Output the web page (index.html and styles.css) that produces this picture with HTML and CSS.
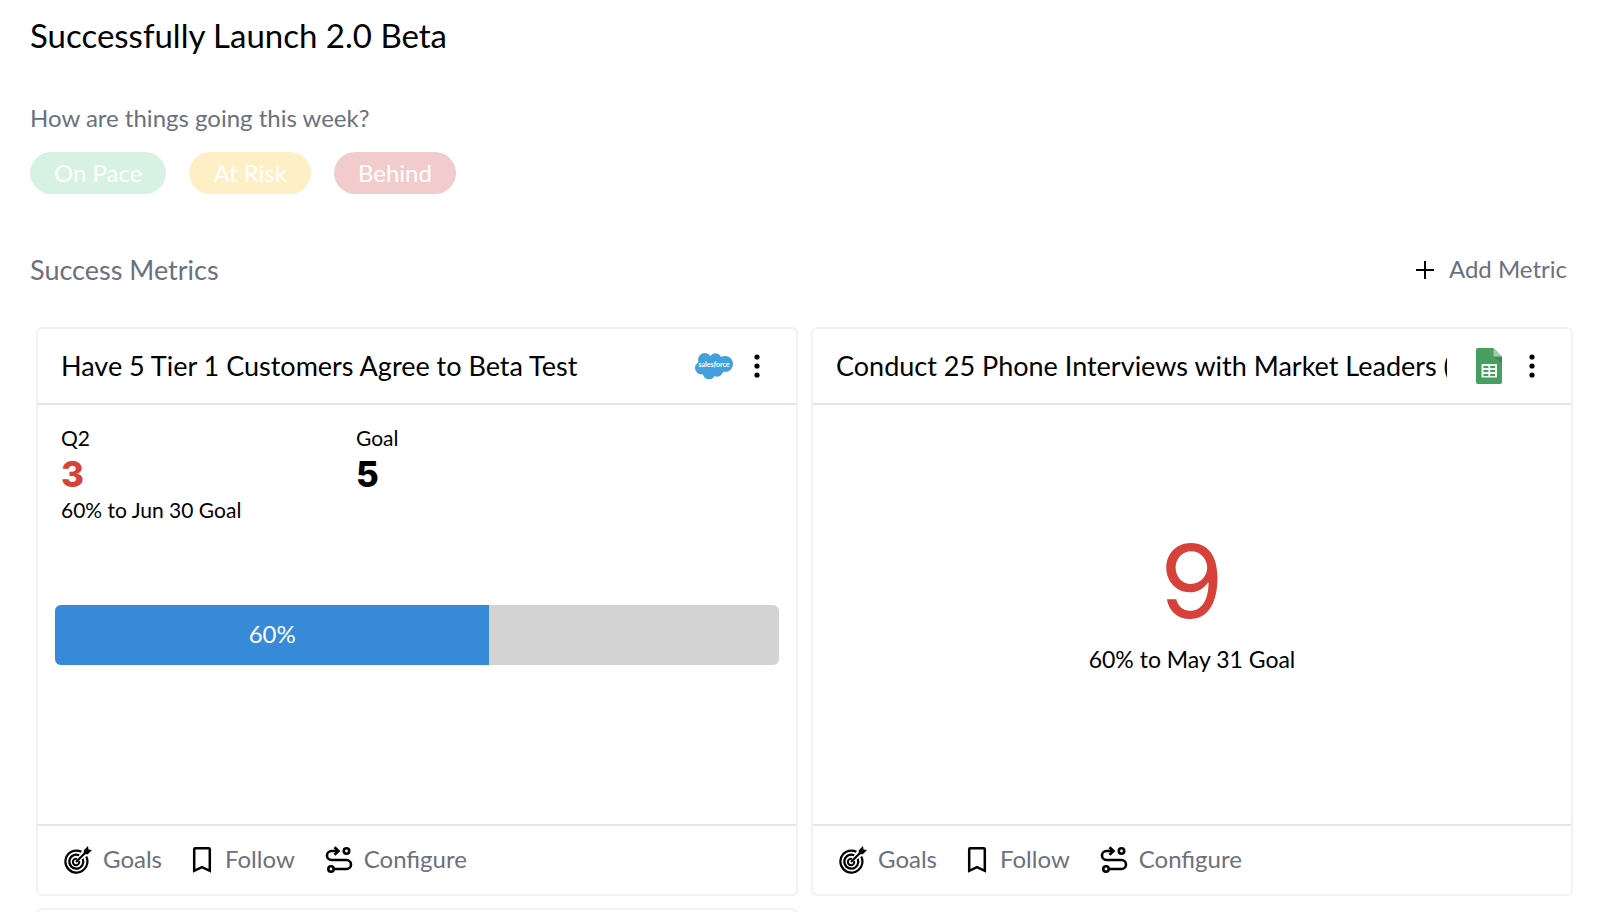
FILE: index.html
```
<!DOCTYPE html>
<html lang="en">

<head>
    <meta charset="UTF-8">
    <meta name="viewport" content="width=device-width, initial-scale=1.0">
    <title>Successfully Launch 2.0 Beta</title>
    <link rel="stylesheet" href="styles.css">
</head>

<body>
    <!-- Shared icons -->
    <svg class="sprite" aria-hidden="true">
        <symbol id="icon-target" viewBox="0 0 28 28" fill="none" stroke="currentColor">
            <path d="M17.4 5.8A11 11 0 1 0 22.2 10.6" stroke-width="2.2" />
            <path d="M15.2 9.3A7 7 0 1 0 18.7 12.8" stroke-width="2.2" />
            <path d="M13 12.9A3.2 3.2 0 1 0 15.1 15" stroke-width="2" />
            <path d="M12 16L22.5 5.5" stroke-width="2.2" />
            <path d="M19.8 8.2V4.2L24 0L24.5 3.5L28 4L23.8 8.2Z" fill="currentColor" stroke="none" />
        </symbol>
        <symbol id="icon-bookmark" viewBox="0 0 20 28" fill="none" stroke="currentColor">
            <path d="M2.2 3.2Q2.2 2.2 3.2 2.2H16.8Q17.8 2.2 17.8 3.2V24.8L10 21.2L2.2 24.8Z" stroke-width="2.5" />
        </symbol>
        <symbol id="icon-route" viewBox="0 0 28 28" fill="none" stroke="currentColor" stroke-width="2.6">
            <path d="M12.5 5H6.5A4.5 4.5 0 0 0 6.5 14H21.5A4.5 4.5 0 0 1 21.5 23H9" />
            <path d="M9.5 1.2L13.5 5L9.5 8.8" />
            <circle cx="21.5" cy="5" r="2.7" />
            <circle cx="6" cy="23" r="2.7" />
        </symbol>
        <symbol id="icon-dots" viewBox="0 0 6 24" fill="currentColor">
            <circle cx="3" cy="3" r="2.6" />
            <circle cx="3" cy="12" r="2.6" />
            <circle cx="3" cy="21" r="2.6" />
        </symbol>
    </svg>

    <header class="page-header">
        <h1>Successfully Launch 2.0 Beta</h1>
    </header>

    <main>
        <section class="checkin">
            <h2>How are things going this week?</h2>
            <div class="status-list">
                <button type="button" class="status on-pace">On Pace</button>
                <button type="button" class="status at-risk">At Risk</button>
                <button type="button" class="status behind">Behind</button>
            </div>
        </section>

        <section class="metrics">
            <div class="metrics-header">
                <h2>Success Metrics</h2>
                <button type="button" class="add-metric">
                    <svg width="18" height="18" viewBox="0 0 18 18" stroke="#000" stroke-width="2" aria-hidden="true">
                        <path d="M9 0V18M0 9H18" />
                    </svg>
                    <span>Add Metric</span>
                </button>
            </div>

            <div class="card-grid">
                <article class="card">
                    <div class="card-header">
                        <h3>Have 5 Tier 1 Customers Agree to Beta Test</h3>
                        <svg class="salesforce" width="38" height="28" viewBox="0 0 38 28" role="img" aria-label="Salesforce">
                            <g fill="#42a1dc">
                                <circle cx="9.8" cy="7.8" r="6.8" />
                                <circle cx="20.5" cy="7" r="5.8" />
                                <circle cx="30" cy="12" r="8" />
                                <circle cx="6.5" cy="16" r="6.5" />
                                <circle cx="14" cy="21" r="6.3" />
                                <circle cx="22" cy="19" r="5.8" />
                                <rect x="8" y="7" width="20" height="14" />
                            </g>
                            <text x="19" y="15">sales<tspan>f</tspan>orce</text>
                        </svg>
                        <button type="button" class="menu" aria-label="More options">
                            <svg width="6" height="24"><use href="#icon-dots" /></svg>
                        </button>
                    </div>
                    <div class="card-body">
                        <div class="stats">
                            <div class="stat">
                                <p>Q2</p>
                                <strong class="red">3</strong>
                                <p>60% to Jun 30 Goal</p>
                            </div>
                            <div class="stat">
                                <p>Goal</p>
                                <strong>5</strong>
                            </div>
                        </div>
                        <div class="progress">
                            <div class="progress-fill" style="width: 60%;">60%</div>
                        </div>
                    </div>
                    <div class="card-footer">
                        <button type="button"><svg width="28" height="28"><use href="#icon-target" /></svg><span>Goals</span></button>
                        <button type="button"><svg class="bookmark" width="20" height="28"><use href="#icon-bookmark" /></svg><span>Follow</span></button>
                        <button type="button"><svg width="28" height="28"><use href="#icon-route" /></svg><span>Configure</span></button>
                    </div>
                </article>

                <article class="card">
                    <div class="card-header">
                        <h3>Conduct 25 Phone Interviews with Market Leaders (</h3>
                        <svg class="sheets" width="26" height="36" viewBox="0 0 26 36" role="img" aria-label="Google Sheets">
                            <path d="M2 0H17.5L26 8.5V34Q26 36 24 36H2Q0 36 0 34V2Q0 0 2 0Z" fill="#489e60" />
                            <path d="M17.5 8.5H26V16Z" fill="#3f8a54" />
                            <path d="M17.5 0L26 8.5H17.5Z" fill="#a0cfae" />
                            <path d="M5.5 16H21V29.5H5.5Z" fill="#eef6f0" />
                            <path d="M7.5 18H12.3V20H7.5ZM14.2 18H19V20H14.2ZM7.5 22H12.3V24H7.5ZM14.2 22H19V24H14.2ZM7.5 26H12.3V28H7.5ZM14.2 26H19V28H14.2Z" fill="#489e60" />
                        </svg>
                        <button type="button" class="menu" aria-label="More options">
                            <svg width="6" height="24"><use href="#icon-dots" /></svg>
                        </button>
                    </div>
                    <div class="card-body centered">
                        <p class="big-number">9</p>
                        <p class="goal-text">60% to May 31 Goal</p>
                    </div>
                    <div class="card-footer">
                        <button type="button"><svg width="28" height="28"><use href="#icon-target" /></svg><span>Goals</span></button>
                        <button type="button"><svg class="bookmark" width="20" height="28"><use href="#icon-bookmark" /></svg><span>Follow</span></button>
                        <button type="button"><svg width="28" height="28"><use href="#icon-route" /></svg><span>Configure</span></button>
                    </div>
                </article>

                <article class="card"></article>
            </div>
        </section>
    </main>
</body>

</html>
```
FILE: styles.css
```
* {
    box-sizing: border-box;
}

body {
    font-family: Lato, "Open Sans", sans-serif;
    margin: 0;
    height: 100vh;
    overflow: hidden;
    background-color: white;
    color: black;
}

h1,
h2,
h3,
p {
    margin: 0;
    font-weight: 400;
}

button {
    padding: 0;
    border: none;
    background: none;
    font-family: inherit;
    font-size: 24px;
    color: #6b7080;
    cursor: pointer;
}

button span {
    padding-bottom: 4px;
}

.sprite {
    display: none;
}

.page-header {
    padding: 15px 30px 0;
}

h1 {
    font-size: 33px;
    line-height: 40px;
}

.checkin {
    padding: 48px 30px 0;
}

.checkin h2 {
    font-size: 24px;
    line-height: 30px;
    color: #6b7080;
}

.status-list {
    display: flex;
    gap: 23px;
    margin-top: 19px;
}

.status {
    height: 42px;
    padding: 0 24px 2px;
    border-radius: 21px;
    color: white;
}

.on-pace {
    background-color: #d7f2e3;
}

.at-risk {
    background-color: #ffefc6;
}

.behind {
    background-color: #f2cccc;
}

.metrics-header {
    display: flex;
    justify-content: space-between;
    align-items: center;
    margin-top: 54px;
    padding: 0 33px 0 30px;
}

.metrics-header h2 {
    font-size: 27px;
    line-height: 44px;
    color: #6b7080;
}

.add-metric {
    display: flex;
    align-items: center;
    gap: 15px;
}

.card-grid {
    display: grid;
    grid-template-columns: 1fr 1fr;
    gap: 12px 13px;
    margin-top: 35px;
    padding: 0 27px 0 36px;
}

.card {
    display: flex;
    flex-direction: column;
    min-width: 0;
    min-height: 569px;
    border: 2px solid #f1f1f5;
    border-radius: 6px;
}

.card-header {
    display: flex;
    align-items: center;
    height: 76px;
    padding: 0 36px 0 23px;
    border-bottom: 2px solid #e4e5ec;
}

.card-header h3 {
    flex: 1;
    overflow: hidden;
    white-space: nowrap;
    font-size: 27px;
    line-height: 36px;
}

.salesforce {
    margin: 0 21px 0 29px;
}

.salesforce text {
    font-size: 7px;
    font-weight: 700;
    text-anchor: middle;
    fill: white;
}

.salesforce tspan {
    font-style: italic;
}

.sheets {
    margin: 0 27px 0 29px;
}

.menu {
    display: flex;
    color: black;
}

.card-body {
    flex: 1;
    padding: 18px 17px;
}

.stats {
    display: grid;
    grid-template-columns: 295px 1fr;
    padding: 0 6px;
}

.stat p {
    font-size: 21px;
    line-height: 30px;
}

.stat strong {
    display: block;
    font-family: Inter, sans-serif;
    font-size: 35px;
    font-weight: 800;
    line-height: 42px;
}

.red {
    color: #d74139;
}

.progress {
    height: 60px;
    margin-top: 80px;
    border-radius: 6px;
    overflow: hidden;
    background-color: #d3d3d3;
}

.progress-fill {
    height: 100%;
    background-color: #368ad8;
    color: white;
    font-size: 24px;
    line-height: 58px;
    text-align: center;
}

.centered {
    display: flex;
    flex-direction: column;
    align-items: center;
    justify-content: center;
    padding-bottom: 46px;
}

.big-number {
    font-family: Inter, sans-serif;
    font-size: 102px;
    line-height: 116px;
    color: #d74139;
}

.goal-text {
    font-size: 23px;
    line-height: 40px;
}

.card-footer {
    display: flex;
    align-items: center;
    gap: 30px;
    height: 70px;
    padding: 0 26px;
    border-top: 2px solid #e4e5ec;
}

.card-footer button {
    display: flex;
    align-items: center;
    gap: 11px;
}

.card-footer svg {
    color: black;
}

.card-footer .bookmark {
    margin-right: 2px;
}
```
